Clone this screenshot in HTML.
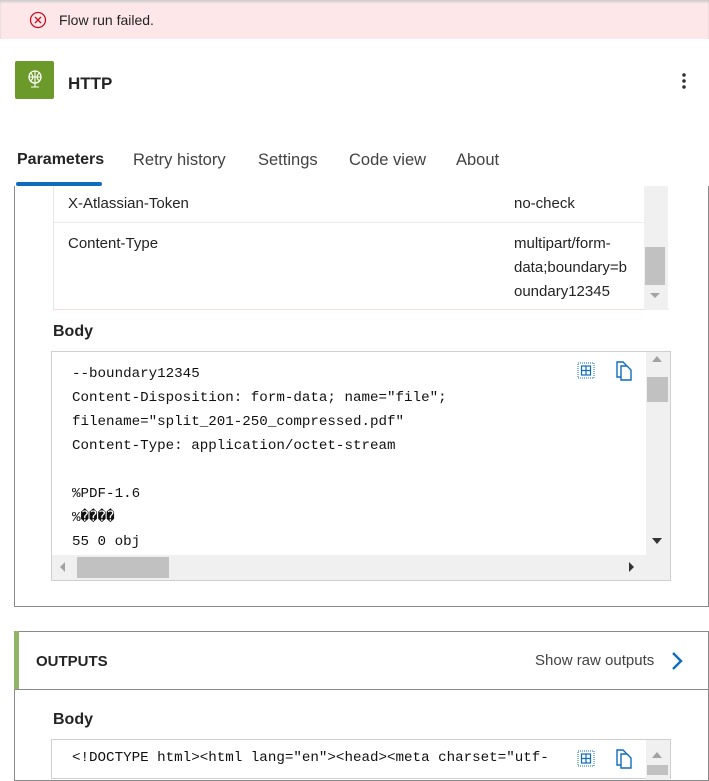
<!DOCTYPE html>
<html><head><meta charset="utf-8"><style>
*{margin:0;padding:0;box-sizing:border-box}
body{width:709px;height:772px;overflow:hidden;background:#fff;font-family:"Segoe UI","Liberation Sans",sans-serif;color:#242424;position:relative}
.a{position:absolute;white-space:nowrap}
.mono{font-family:"Liberation Mono","DejaVu Sans Mono",monospace;font-size:14.2px;color:#111}
</style></head><body>
<div class="a" style="left:0;top:0;width:709px;height:39px;background:#fde7e9;box-shadow:inset 0 2px 2px #ccc"></div>
<svg class="a" style="left:29px;top:11px" width="18" height="18" viewBox="0 0 18 18"><circle cx="9" cy="9" r="7.5" fill="none" stroke="#c50f1f" stroke-width="1.3"/><path d="M6 6L12 12M12 6L6 12" stroke="#c50f1f" stroke-width="1.3"/></svg>
<div class="a" style="left:59px;top:12px;font-size:14px;color:#242424">Flow run failed.</div>

<div class="a" style="left:15px;top:61px;width:39px;height:38px;background:#6b9a2b;border-radius:2px"></div>
<svg class="a" style="left:25px;top:68px" width="20" height="24" viewBox="0 0 20 24"><circle cx="10" cy="9" r="6" fill="none" stroke="#fff" stroke-width="1.3"/><path d="M4 9H16M10 3V15M6 5.5Q10 9 6 12.5M14 5.5Q10 9 14 12.5M10 15V19M6 19H14" stroke="#fff" stroke-width="1.1" fill="none"/></svg>
<div class="a" style="left:68px;top:74px;font-size:17px;font-weight:600">HTTP</div>
<div class="a" style="left:682px;top:72px;width:4px;height:18px;background:radial-gradient(circle,#333 1.6px,transparent 2px) 0 0/4px 6px"></div>

<div class="a" style="left:17px;top:151px;font-size:16px;font-weight:600">Parameters</div>
<div class="a" style="left:133px;top:151px;font-size:16.5px;color:#424242">Retry history</div>
<div class="a" style="left:258px;top:151px;font-size:16.5px;color:#424242">Settings</div>
<div class="a" style="left:349px;top:151px;font-size:16.5px;color:#424242">Code view</div>
<div class="a" style="left:456px;top:151px;font-size:16.5px;color:#424242">About</div>
<div class="a" style="left:16px;top:182px;width:86px;height:4px;background:#0f6cbd;border-radius:2px"></div>

<div class="a" style="left:14px;top:186px;width:695px;height:421px;border:1px solid #8a8a8a;border-top:none"></div>
<div class="a" style="left:53px;top:186px;width:616px;height:124px;border-left:1px solid #e6e6e6;border-bottom:1px solid #f3dede"></div>
<div class="a" style="left:54px;top:222px;width:590px;height:1px;background:#ececec"></div>
<div class="a" style="left:68px;top:195px;font-size:15px">X-Atlassian-Token</div>
<div class="a" style="left:514px;top:195px;font-size:15px">no-check</div>
<div class="a" style="left:68px;top:235px;font-size:15px">Content-Type</div>
<div class="a" style="left:514px;top:232px;font-size:15px;line-height:24px;white-space:normal;width:130px">multipart/form-<br>data;boundary=b<br>oundary12345</div>
<div class="a" style="left:644px;top:186px;width:24px;height:124px;background:#f0f0f0"></div>
<div class="a" style="left:645px;top:247px;width:20px;height:38px;background:#c1c1c1"></div>
<div class="a" style="left:650px;top:293px;border:5px solid transparent;border-top:5px solid #a3a3a3"></div>

<div class="a" style="left:53px;top:323px;font-size:16px;font-weight:600">Body</div>
<div class="a" style="left:51px;top:351px;width:620px;height:230px;border:1px solid #cfcfcf"></div>
<div class="a mono" style="left:72px;top:362px;line-height:24px">--boundary12345<br>Content-Disposition: form-data; name="file";<br>filename="split_201-250_compressed.pdf"<br>Content-Type: application/octet-stream<br><br>%PDF-1.6<br>%����<br>55 0 obj</div>
<div class="a" style="left:646px;top:352px;width:24px;height:228px;background:#f0f0f0"></div>
<div class="a" style="left:652px;top:356px;border:5px solid transparent;border-bottom:6px solid #a3a3a3;border-top:none"></div>
<div class="a" style="left:647px;top:377px;width:21px;height:25px;background:#c1c1c1"></div>
<div class="a" style="left:652px;top:538px;border:5px solid transparent;border-top:6px solid #333;border-bottom:none"></div>
<div class="a" style="left:52px;top:555px;width:594px;height:25px;background:#f0f0f0"></div>
<div class="a" style="left:77px;top:557px;width:92px;height:21px;background:#c1c1c1"></div>
<div class="a" style="left:60px;top:562px;border:5px solid transparent;border-right:5px solid #a3a3a3;border-left:none"></div>
<div class="a" style="left:629px;top:562px;border:5px solid transparent;border-left:5px solid #333;border-right:none"></div>
<svg class="a" style="left:577px;top:362px" width="18" height="17" viewBox="0 0 18 17"><rect x="1" y="1" width="16" height="15" fill="none" stroke="#0f6cbd" stroke-dasharray="1 1" stroke-width="1"/><rect x="4.5" y="4" width="9" height="9" fill="none" stroke="#0f6cbd" stroke-width="1.2"/><path d="M9 4V13M4.5 8.5H13.5" stroke="#0f6cbd" stroke-width="1.2"/></svg>
<svg class="a" style="left:615px;top:361px" width="20" height="20" viewBox="0 0 20 20"><path d="M2 1H8L11 4V16H2Z" fill="#fff" stroke="#0f6cbd" stroke-width="1.4"/><path d="M6 5H12L16 9V19H6Z" fill="#fff" stroke="#0f6cbd" stroke-width="1.4"/></svg>

<div class="a" style="left:14px;top:631px;width:695px;height:150px;border:1px solid #8a8a8a"></div>
<div class="a" style="left:14px;top:631px;width:5px;height:59px;background:#92b468"></div>
<div class="a" style="left:15px;top:689px;width:694px;height:1px;background:#8a8a8a"></div>
<div class="a" style="left:36px;top:653px;font-size:15px;font-weight:600">OUTPUTS</div>
<div class="a" style="left:535px;top:652px;font-size:15px;color:#424242">Show raw outputs</div>
<svg class="a" style="left:670px;top:651px" width="14" height="20" viewBox="0 0 14 20"><path d="M3 2L11 10L3 18" fill="none" stroke="#0f6cbd" stroke-width="2.4"/></svg>
<div class="a" style="left:53px;top:711px;font-size:16px;font-weight:600">Body</div>
<div class="a" style="left:51px;top:739px;width:620px;height:40px;border:1px solid #cfcfcf"></div>
<div class="a mono" style="left:72px;top:750px">&lt;!DOCTYPE html&gt;&lt;html lang="en"&gt;&lt;head&gt;&lt;meta charset="utf-</div>
<div class="a" style="left:563px;top:741px;width:83px;height:30px;background:#fff"></div>
<div class="a" style="left:646px;top:740px;width:24px;height:40px;background:#f0f0f0"></div>
<div class="a" style="left:652px;top:752px;border:5px solid transparent;border-bottom:6px solid #a3a3a3;border-top:none"></div>
<div class="a" style="left:647px;top:765px;width:21px;height:10px;background:#c1c1c1"></div>
<svg class="a" style="left:577px;top:750px" width="18" height="17" viewBox="0 0 18 17"><rect x="1" y="1" width="16" height="15" fill="none" stroke="#0f6cbd" stroke-dasharray="1 1" stroke-width="1"/><rect x="4.5" y="4" width="9" height="9" fill="none" stroke="#0f6cbd" stroke-width="1.2"/><path d="M9 4V13M4.5 8.5H13.5" stroke="#0f6cbd" stroke-width="1.2"/></svg>
<svg class="a" style="left:615px;top:749px" width="20" height="20" viewBox="0 0 20 20"><path d="M2 1H8L11 4V16H2Z" fill="#fff" stroke="#0f6cbd" stroke-width="1.4"/><path d="M6 5H12L16 9V19H6Z" fill="#fff" stroke="#0f6cbd" stroke-width="1.4"/></svg>
</body></html>
